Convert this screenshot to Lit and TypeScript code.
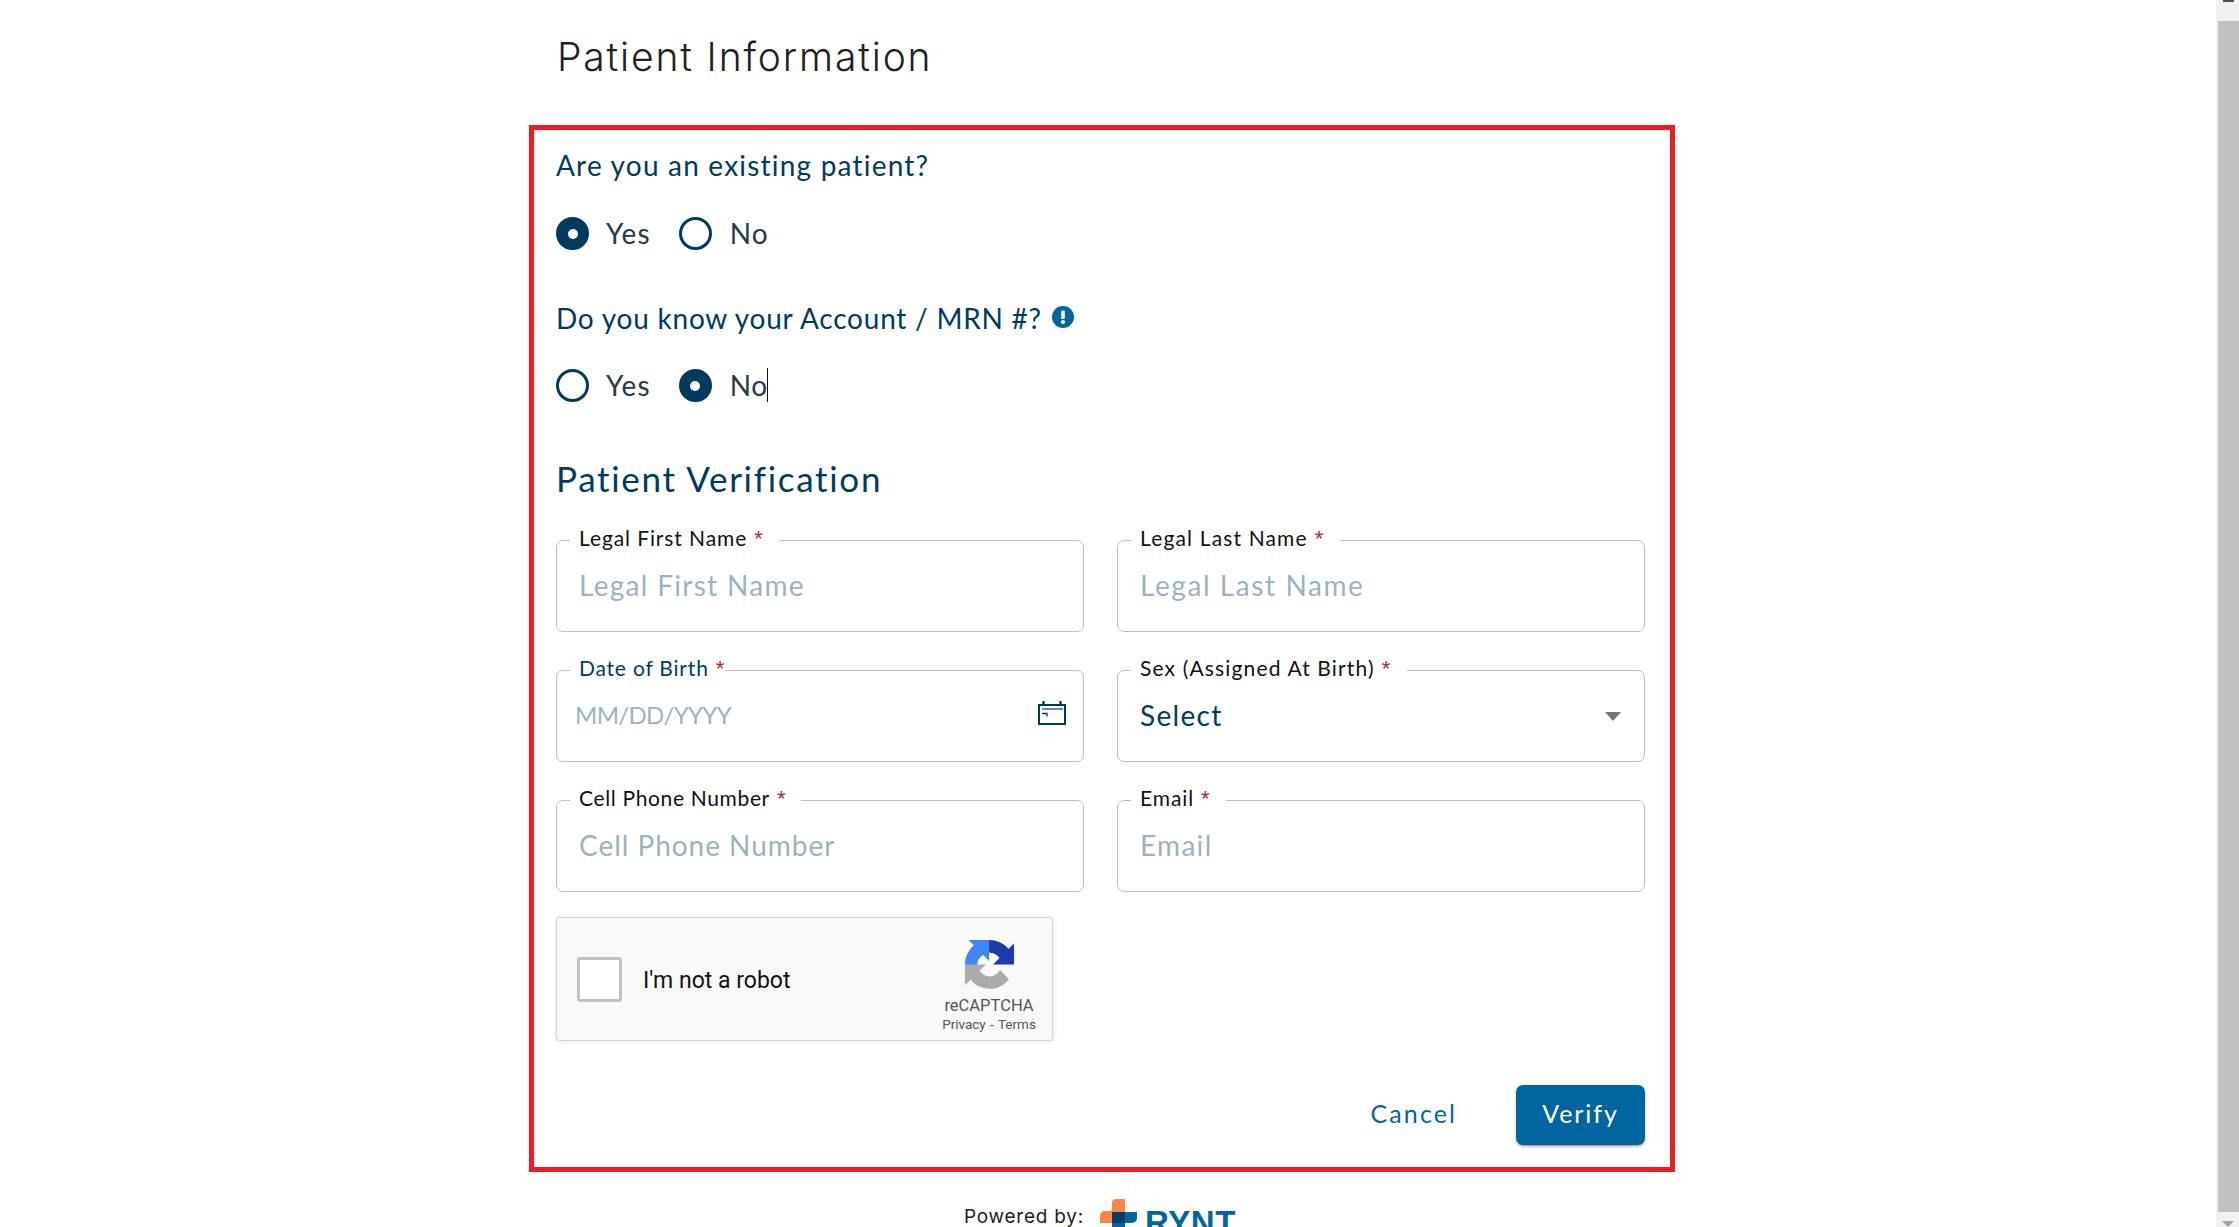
import { LitElement, html, css } from "lit";
import { customElement } from "lit/decorators.js";

interface Field {
  label: string;
  placeholder?: string;
  kind?: "date" | "select";
  fit?: "loose" | "tight";
}

const FIELDS: Field[] = [
  { label: "Legal First Name", placeholder: "Legal First Name" },
  { label: "Legal Last Name", placeholder: "Legal Last Name", fit: "loose" },
  { label: "Date of Birth", placeholder: "MM/DD/YYYY", kind: "date" },
  { label: "Sex (Assigned At Birth)", placeholder: "Select", kind: "select", fit: "loose" },
  { label: "Cell Phone Number", placeholder: "Cell Phone Number", fit: "tight" },
  { label: "Email", placeholder: "Email" },
];

@customElement("app-root")
export class AppRoot extends LitElement {
  static styles = css`
    :host {
      display: flex;
      width: 100%;
      height: 1227px;
      overflow: hidden;
      background: #fff;
      font-family: "Lato", "Noto Sans", sans-serif;
      color: #003b5f;
    }
    .main { flex: 1; min-width: 0; padding-left: 529px; box-sizing: border-box; }
    .title {
      margin: 0;
      height: 125px;
      box-sizing: border-box;
      padding: 29px 0 0 28px;
      font: 350 39px/56px "Inter", sans-serif;
      letter-spacing: 1.85px;
      color: #212121;
    }
    .frame {
      width: 1146px;
      height: 1047px;
      box-sizing: border-box;
      border: 5px solid #ed1c24;
      padding: 19px 25px 0 22px;
    }
    .question { margin: 0; font-size: 28px; line-height: 32px; letter-spacing: 1.2px; display: flex; align-items: center; gap: 10px; }
    .q2 { margin-top: 52px; letter-spacing: 0.77px; }
    .info { width: 22px; height: 22px; flex: none; margin-top: -3px; }
    .radios { display: flex; gap: 28px; margin-top: 35px; height: 33px; }
    .radios.first { margin-top: 36px; }
    .option { display: flex; align-items: center; gap: 17px; height: 33px; box-sizing: border-box; padding-bottom: 2px; font-size: 28px; letter-spacing: 1.1px; color: #263a48; }
    .option.no { gap: 18px; }
    .radio { width: 33px; height: 33px; margin-bottom: -2px; box-sizing: border-box; border: 3px solid #003b5f; border-radius: 50%; flex: none; display: flex; align-items: center; justify-content: center; }
    .radio.on { background: #003b5f; }
    .radio.on::after { content: ""; width: 10px; height: 10px; border-radius: 50%; background: #fff; }
    .typed { display: flex; align-items: center; letter-spacing: 0.6px; }
    .caret { width: 1px; height: 34px; background: #111; flex: none; margin-left: -1px; }
    .sub { margin: 54px 0 0; font-size: 35px; font-weight: 400; line-height: 44px; letter-spacing: 1.7px; }
    .grid { display: grid; grid-template-columns: 528px 528px; column-gap: 33px; row-gap: 26px; margin-top: 28px; }
    fieldset { margin: 0; padding: 0; min-width: 0; height: 104px; box-sizing: border-box; border: 1px solid #bdbdbd; border-radius: 7px; }
    legend { margin-left: 12.5px; padding: 0 15px 4px 9.5px; font-size: 21px; line-height: 20px; letter-spacing: 0.9px; color: #111; }
    legend.date { color: #003b5f; padding-right: 0; letter-spacing: 0.8px; }
    legend b { font: 400 22px/20px "Liberation Sans", sans-serif; color: #a82a2a; margin-left: 7px; }
    .loose legend { letter-spacing: 1.15px; }
    .tight legend { letter-spacing: 0.65px; }
    .body { height: 79px; box-sizing: border-box; padding: 0 21.5px 15px 22px; display: flex; align-items: center; justify-content: space-between; }
    .ph { font-size: 28px; letter-spacing: 1.3px; color: #9bb2c1; }
    .loose .ph { letter-spacing: 1.58px; }
    .tight .ph { letter-spacing: 0.97px; }
    .ph.date { font-size: 24px; letter-spacing: -0.65px; margin: -2px 0 0 -4px; }
    .value { font-size: 28px; letter-spacing: 1.3px; color: #003b5f; }
    .cal { width: 28px; height: 24px; flex: none; margin: -4px -4px 0 0; }
    .arrow { width: 0; height: 0; margin: 3px 2px 0 0; border-left: 8.5px solid transparent; border-right: 8.5px solid transparent; border-top: 9px solid #757575; }
    .captcha {
      width: 497px; height: 124px; box-sizing: border-box; margin-top: 25px;
      background: #f9f9f9; border: 1px solid #d3d3d3; border-radius: 3px;
      box-shadow: 0 0 4px 1px rgba(0, 0, 0, 0.08);
      display: flex; align-items: center; padding: 0 17px 0 20px;
      font-family: "Roboto", sans-serif;
    }
    .box { width: 45px; height: 45px; box-sizing: border-box; background: #fff; border: 3px solid #c1c1c1; border-radius: 3px; flex: none; }
    .robot { margin-left: 21px; font-size: 23px; color: #111; flex: 1; padding-top: 3px; }
    .brand { display: flex; flex-direction: column; align-items: center; color: #555; width: 92px; margin-top: 13px; }
    .brand svg { width: 49px; height: 49px; margin-bottom: 8px; }
    .brand .name { font-size: 16.5px; line-height: 18px; }
    .brand .links { font-size: 13.5px; line-height: 16px; margin-top: 1px; white-space: nowrap; word-spacing: 1px; }
    .actions { display: flex; justify-content: flex-end; align-items: center; margin-top: 44px; gap: 59px; }
    .cancel { font-size: 25px; letter-spacing: 2.1px; color: #02659f; padding-bottom: 4px; }
    .verify {
      width: 129px; height: 60px; box-sizing: border-box; padding-bottom: 4px; border-radius: 7px; background: #02659f; color: #fff;
      display: flex; align-items: center; justify-content: center;
      font-size: 25px; letter-spacing: 1.9px;
      box-shadow: 0 3px 1px -2px rgba(0, 0, 0, 0.2), 0 2px 2px rgba(0, 0, 0, 0.14), 0 1px 5px rgba(0, 0, 0, 0.12);
    }
    .footer { display: flex; align-items: flex-start; margin-left: 435px; height: 55px; overflow: hidden; }
    .powered { font: 400 19px/16px "Inter", sans-serif; letter-spacing: 0.75px; color: #212121; margin-top: 37px; white-space: nowrap; width: 136px; }
    .cross { width: 37px; height: 28px; flex: none; margin-top: 27px; }
    .rynt { font: 700 33px/36px "Liberation Sans", sans-serif; letter-spacing: 0.6px; color: #02659f; margin: 33px 0 0 8px; }
    .scroll { width: 23px; flex: none; background: #f1f1f1; display: flex; flex-direction: column; align-items: flex-end; }
    .up { width: 11px; height: 2px; background: #505050; margin: 0 5px 19px 0; }
    .thumb { width: 21px; height: 1191px; background: #c1c1c1; }
    .down { width: 0; height: 0; margin: 9px 5px 0 0; border-left: 6px solid transparent; border-right: 6px solid transparent; border-top: 6px solid #a3a3a3; }
  `;

  private renderField(f: Field) {
    const legendClass = f.kind === "date" ? "date" : "";
    let content;
    if (f.kind === "date") {
      content = html`<span class="ph date">${f.placeholder}</span>
        <svg class="cal" viewBox="0 0 28 24" fill="none" aria-hidden="true">
          <rect x="1" y="4" width="26" height="19" stroke="#003b5f" stroke-width="2"></rect>
          <path d="M5.5 0v4M22.5 0v4" stroke="#003b5f" stroke-width="2.4"></path>
          <path d="M4 8h21" stroke="#6b8ba0" stroke-width="2"></path>
          <path d="M4 12.500h5v3" stroke="#003b5f" stroke-width="1.300"></path>
        </svg>`;
    } else if (f.kind === "select") {
      content = html`<span class="value">${f.placeholder}</span><span class="arrow"></span>`;
    } else {
      content = html`<span class="ph">${f.placeholder}</span>`;
    }
    return html`<fieldset class=${f.fit ?? ""}>
      <legend class=${legendClass}>${f.label}<b>*</b></legend>
      <div class="body">${content}</div>
    </fieldset>`;
  }

  render() {
    return html`
      <div class="main">
        <h1 class="title">Patient Information</h1>
        <section class="frame">
          <p class="question">Are you an existing patient?</p>
          <div class="radios first">
            <label class="option"><span class="radio on"></span>Yes</label>
            <label class="option no"><span class="radio"></span>No</label>
          </div>
          <p class="question q2">
            <span>Do you know your Account / MRN #?</span>
            <svg class="info" viewBox="0 0 22 22" aria-hidden="true">
              <circle cx="11" cy="11" r="11" fill="#02659f"></circle>
              <rect x="9.200" y="4.500" width="3.600" height="8.500" rx="1.200" fill="#fff"></rect>
              <circle cx="11" cy="16" r="2" fill="#fff"></circle>
            </svg>
          </p>
          <div class="radios">
            <label class="option"><span class="radio"></span>Yes</label>
            <label class="option no"><span class="radio on"></span><span class="typed">No<span class="caret"></span></span></label>
          </div>
          <h2 class="sub">Patient Verification</h2>
          <div class="grid">${FIELDS.map((f) => this.renderField(f))}</div>
          <div class="captcha">
            <span class="box"></span>
            <span class="robot">I'm not a robot</span>
            <div class="brand">
              <svg viewBox="0 0 64 64" aria-hidden="true">
                <path d="M64 31.955l-.033-1.37V4.687l-7.16 7.16C50.948 4.674 42.033.093 32.05.093c-10.4 0-19.622 4.96-25.458 12.64l11.736 11.86a15.55 15.55 0 0 1 4.754-5.334c2.05-1.6 4.952-2.906 8.968-2.906.485 0 .86.057 1.135.163 4.976.393 9.29 3.14 11.83 7.124l-8.307 8.307 26.295.004" fill="#1c3aa9"></path>
                <path d="M31.862.001l-1.37.033H4.594l7.16 7.16C4.58 13.053 0 21.968 0 31.951c0 .40.007.799.022 1.195l15.97-.004c-.025-.38-.04-.76-.04-1.15 0-.485.057-.86.163-1.135.393-4.976 3.14-9.29 7.124-11.83l8.307 8.307.004-26.295" fill="#4285f4"></path>
                <path d="M.001 31.953l.033 1.37v25.898l7.16-7.16c5.86 7.173 14.775 11.753 24.76 11.753 10.4 0 19.622-4.96 25.458-12.64l-11.736-11.86a15.55 15.55 0 0 1-4.754 5.334c-2.05 1.6-4.952 2.906-8.968 2.906-.485 0-.86-.057-1.135-.163-4.976-.393-9.29-3.14-11.83-7.124l8.307-8.307-26.295-.004" fill="#ababab"></path>
              </svg>
              <span class="name">reCAPTCHA</span>
              <span class="links">Privacy - Terms</span>
            </div>
          </div>
          <div class="actions">
            <span class="cancel">Cancel</span>
            <span class="verify">Verify</span>
          </div>
        </section>
        <footer class="footer">
          <span class="powered">Powered by:</span>
          <svg class="cross" viewBox="0 0 37 28" aria-hidden="true">
            <path d="M12 4a4 4 0 0 1 4-4h9v24H0v-7a5 5 0 0 1 5-5h7z" fill="#ff8447"></path>
            <path d="M12 13h25v6a5 5 0 0 1-5 5h-7v4H12z" fill="#02659f"></path>
            <rect x="12" y="13" width="13" height="11" fill="#033e63"></rect>
          </svg>
          <span class="rynt">RYNT</span>
        </footer>
      </div>
      <div class="scroll">
        <span class="up"></span>
        <span class="thumb"></span>
        <span class="down"></span>
      </div>
    `;
  }
}
